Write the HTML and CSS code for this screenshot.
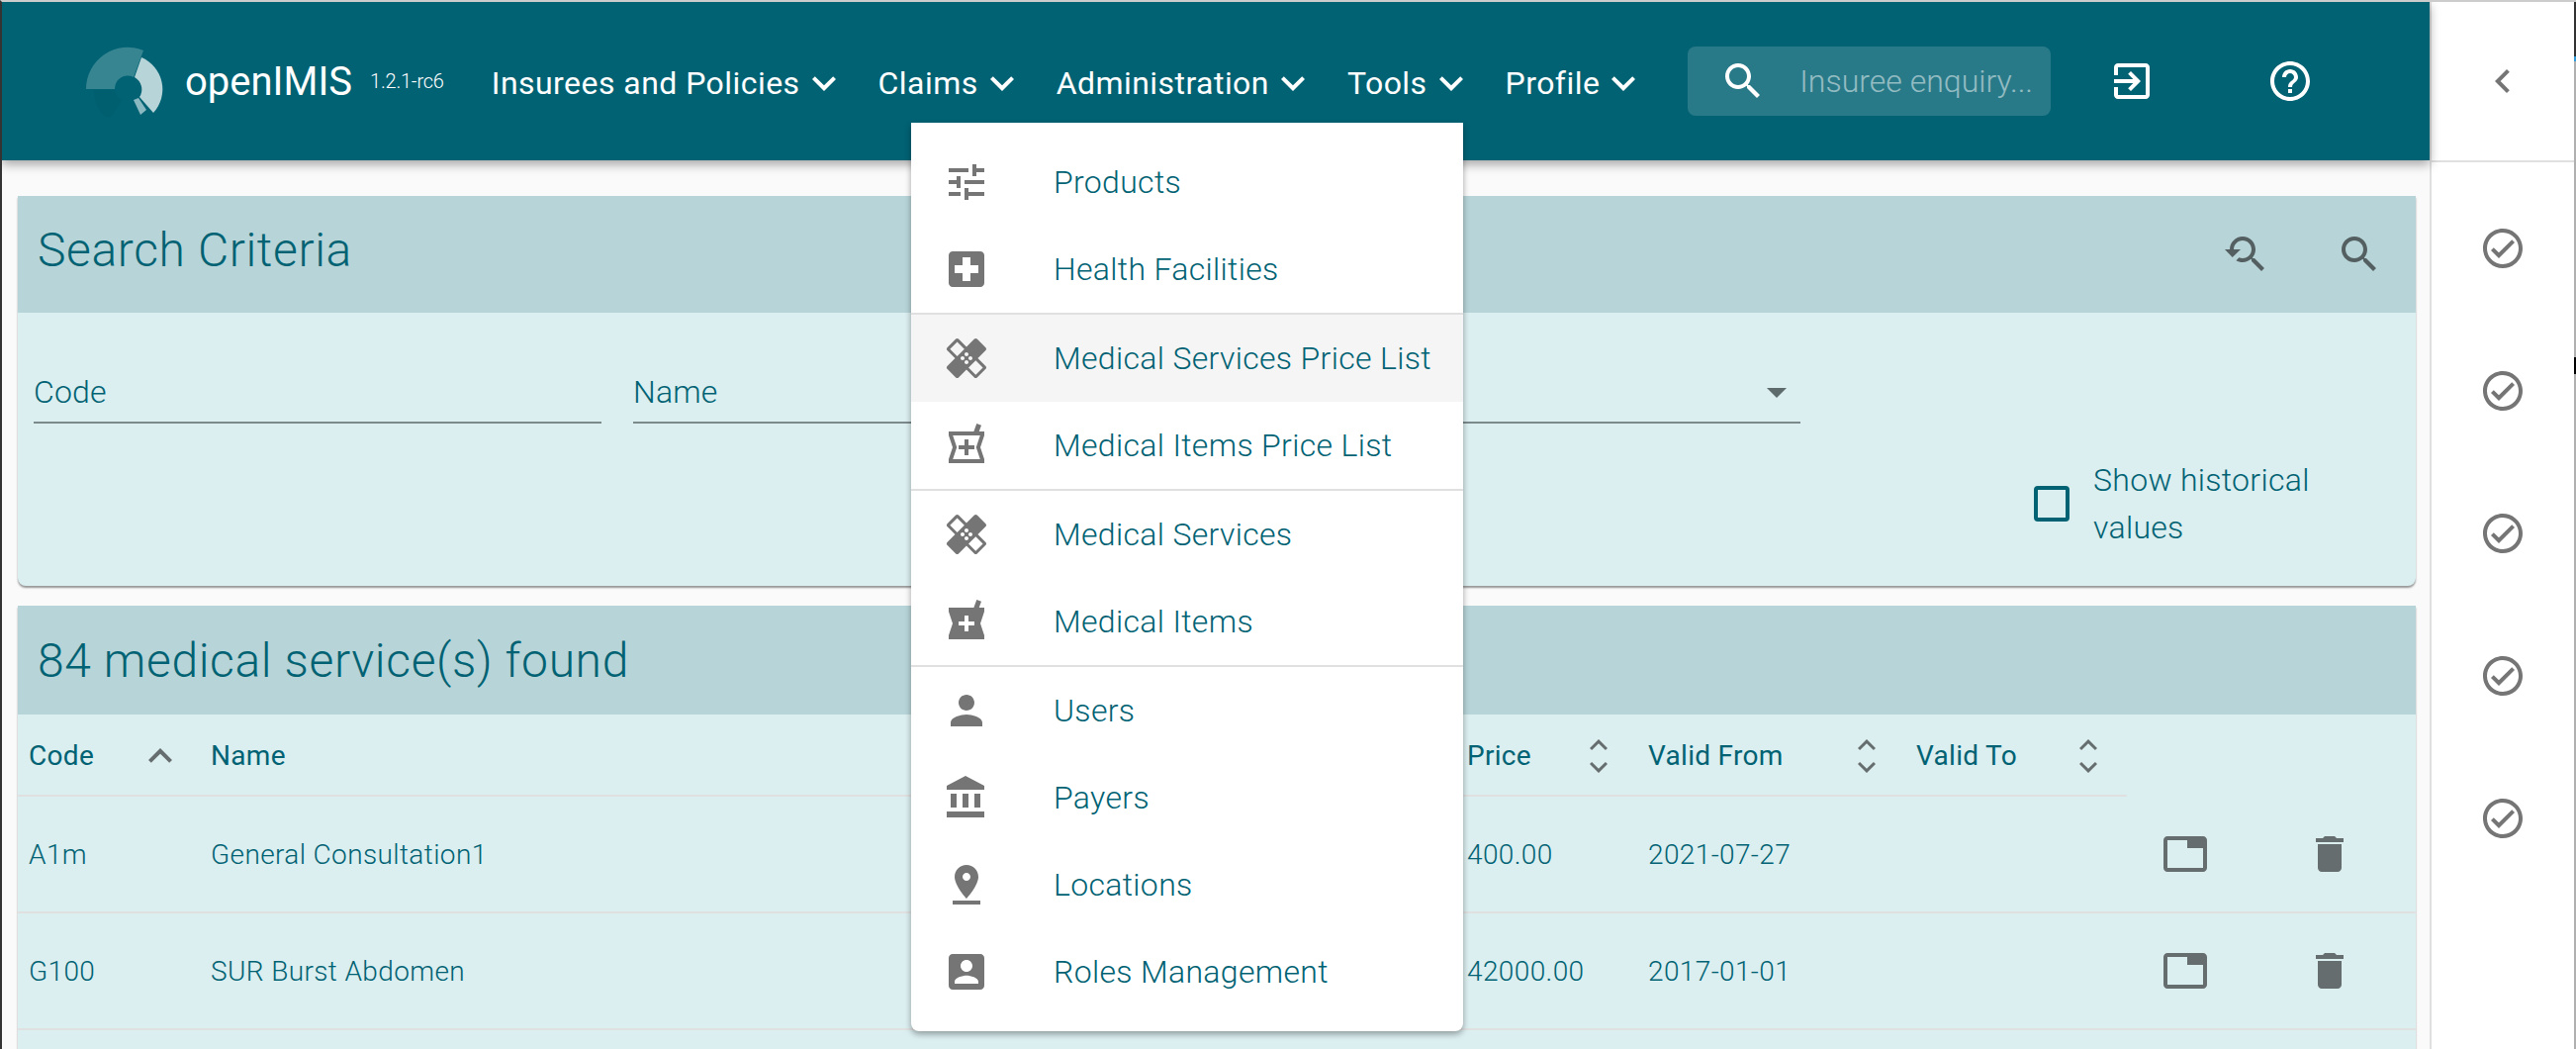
FILE: index.html
```html
<!DOCTYPE html>
<html>
<head>
	<meta charset="utf-8">
	<title>openIMIS</title>
	<link rel="stylesheet" href="styles.css">
</head>
<body>
	<svg class="defs" width="0" height="0">
		<symbol id="i-more" viewBox="0 0 24 24"><path d="M16.59 8.59L12 13.17 7.41 8.59 6 10l6 6 6-6z"/></symbol>
		<symbol id="i-less" viewBox="0 0 24 24"><path d="M12 8l-6 6 1.41 1.41L12 10.83l4.59 4.58L18 14z"/></symbol>
		<symbol id="i-search" viewBox="0 0 24 24"><path d="M15.5 14h-.79l-.28-.27C15.41 12.59 16 11.11 16 9.5 16 5.91 13.09 3 9.5 3S3 5.91 3 9.5 5.91 16 9.5 16c1.61 0 3.09-.59 4.23-1.57l.27.28v.79l5 4.99L20.49 19l-4.99-5zm-6 0C7.01 14 5 11.99 5 9.5S7.01 5 9.5 5 14 7.01 14 9.5 11.99 14 9.5 14z"/></symbol>
		<symbol id="i-healing" viewBox="0 0 24 24"><path d="M17.73 12.02l3.98-3.98c.39-.39.39-1.02 0-1.41l-4.34-4.34c-.39-.39-1.02-.39-1.41 0l-3.98 3.98L8 2.29C7.8 2.1 7.55 2 7.29 2c-.25 0-.51.1-.7.29L2.25 6.63c-.39.39-.39 1.02 0 1.41l3.98 3.98L2.25 16c-.39.39-.39 1.02 0 1.41l4.34 4.34c.39.39 1.02.39 1.41 0l3.98-3.98 3.98 3.98c.2.2.45.29.71.29.26 0 .51-.1.71-.29l4.34-4.34c.39-.39.39-1.02 0-1.41l-3.98-3.98zM12 9c.55 0 1 .45 1 1s-.45 1-1 1-1-.45-1-1 .45-1 1-1zm-4.71 1.96L3.66 7.34l3.63-3.63 3.62 3.62-3.62 3.63zM10 13c-.55 0-1-.45-1-1s.45-1 1-1 1 .45 1 1-.45 1-1 1zm2 2c-.55 0-1-.45-1-1s.45-1 1-1 1 .45 1 1-.45 1-1 1zm2-4c.55 0 1 .45 1 1s-.45 1-1 1-1-.45-1-1 .45-1 1-1zm2.66 9.34l-3.63-3.62 3.63-3.63 3.62 3.62-3.62 3.63z"/></symbol>
		<symbol id="i-check" viewBox="0 0 24 24"><path d="M12 2C6.48 2 2 6.48 2 12s4.48 10 10 10 10-4.48 10-10S17.52 2 12 2zm0 18c-4.41 0-8-3.59-8-8s3.59-8 8-8 8 3.59 8 8-3.59 8-8 8zm4.59-12.42L10 14.17l-2.59-2.58L6 13l4 4 8-8z"/></symbol>
		<symbol id="i-tab" viewBox="0 0 24 24"><path d="M21 3H3c-1.1 0-2 .9-2 2v14c0 1.1.9 2 2 2h18c1.1 0 2-.9 2-2V5c0-1.1-.9-2-2-2zm0 16H3V5h10v4h8v10z"/></symbol>
		<symbol id="i-delete" viewBox="0 0 24 24"><path d="M6 19c0 1.1.9 2 2 2h8c1.1 0 2-.9 2-2V7H6v12zM19 4h-3.5l-1-1h-5l-1 1H5v2h14V4z"/></symbol>
	</svg>

	<div class="page">
		<div class="main">
			<header class="appbar">
				<svg class="logo" viewBox="0 0 90 72">
					<path fill="#005f6f" d="M15 45 L36 45 A13 13 0 0 0 43 55 L30 75 A38 38 0 0 1 15 45Z"/>
					<path fill="#388592" d="M7 44 A42 42 0 0 1 65 5 L55 32 A13 13 0 0 0 36 44Z"/>
					<path fill="#b7d4d8" d="M63 12 A35 35 0 0 1 75 68 L61 52 A14 14 0 0 0 56 32Z"/>
					<path fill="#8bb9c2" d="M55 55 L60 53 L68 65 L62 70Z"/>
				</svg>
				<span class="brand">openIMIS</span>
				<span class="version">1.2.1-rc6</span>
				<nav class="nav">
					<a class="nav-item">Insurees and Policies<svg class="icon"><use href="#i-more"/></svg></a>
					<a class="nav-item">Claims<svg class="icon"><use href="#i-more"/></svg></a>
					<a class="nav-item">Administration<svg class="icon"><use href="#i-more"/></svg></a>
					<a class="nav-item">Tools<svg class="icon"><use href="#i-more"/></svg></a>
					<a class="nav-item">Profile<svg class="icon"><use href="#i-more"/></svg></a>
				</nav>
				<div class="search">
					<svg class="icon"><use href="#i-search"/></svg>
					<span class="search-text">Insuree enquiry...</span>
				</div>
				<svg class="icon exit" viewBox="0 0 24 24"><path d="M10.09 15.59L11.5 17l5-5-5-5-1.41 1.41L12.67 11H3v2h9.67l-2.58 2.59zM19 3H5c-1.11 0-2 .9-2 2v4h2V5h14v14H5v-4H3v4c0 1.1.89 2 2 2h14c1.1 0 2-.9 2-2V5c0-1.1-.9-2-2-2z"/></svg>
				<svg class="icon help" viewBox="0 0 24 24"><path d="M11 18h2v-2h-2v2zm1-16C6.48 2 2 6.48 2 12s4.48 10 10 10 10-4.48 10-10S17.52 2 12 2zm0 18c-4.41 0-8-3.59-8-8s3.59-8 8-8 8 3.59 8 8-3.59 8-8 8zm0-14c-2.21 0-4 1.79-4 4h2c0-1.1.9-2 2-2s2 .9 2 2c0 2-3 1.75-3 5h2c0-2.25 3-2.5 3-5 0-2.21-1.79-4-4-4z"/></svg>
			</header>

			<div class="content">
				<section class="panel criteria">
					<div class="panel-head criteria-head">
						<h2 class="panel-title">Search Criteria</h2>
						<div class="panel-actions">
							<svg class="icon" viewBox="0 0 24 24"><path d="M17.01 14h-.8l-.27-.27c.98-1.14 1.57-2.61 1.57-4.23 0-3.59-2.91-6.5-6.5-6.5s-6.5 3-6.5 6.5H2l3.84 4 4.16-4H6.51C6.51 7 8.53 5 11.01 5s4.5 2.01 4.5 4.5c0 2.48-2.02 4.5-4.5 4.5-.65 0-1.26-.14-1.82-.38L7.71 15.1c.97.57 2.09.9 3.3.9 1.61 0 3.08-.59 4.22-1.57l.27.27v.79l5.01 5L21.99 19l-4.98-5z"/></svg>
							<svg class="icon"><use href="#i-search"/></svg>
						</div>
					</div>
					<div class="criteria-body">
						<div class="field">Code</div>
						<div class="field">Name</div>
						<div class="field field-select"><span class="select-arrow"></span></div>
						<div class="spacer"></div>
						<label class="historical">
							<span class="checkbox"></span>
							<span class="historical-text">Show historical values</span>
						</label>
					</div>
				</section>

				<section class="panel results">
					<div class="panel-head results-head">
						<h2 class="panel-title">84 medical service(s) found</h2>
					</div>
					<table class="grid">
						<colgroup>
							<col class="col-code"><col class="col-name"><col class="col-price"><col class="col-from"><col class="col-to"><col class="col-tab"><col class="col-del">
						</colgroup>
						<thead>
							<tr>
								<th class="head-code"><div class="th-in">Code<svg class="icon"><use href="#i-less"/></svg></div></th>
								<th><div class="th-in">Name</div></th>
								<th><div class="th-in">Price<span class="sort"><svg class="icon"><use href="#i-less"/></svg><svg class="icon"><use href="#i-more"/></svg></span></div></th>
								<th><div class="th-in">Valid From<span class="sort"><svg class="icon"><use href="#i-less"/></svg><svg class="icon"><use href="#i-more"/></svg></span></div></th>
								<th><div class="th-in">Valid To<span class="sort"><svg class="icon"><use href="#i-less"/></svg><svg class="icon"><use href="#i-more"/></svg></span></div></th>
								<th class="th-blank"></th>
								<th class="th-blank"></th>
							</tr>
						</thead>
						<tbody>
							<tr>
								<td>A1m</td>
								<td>General Consultation1</td>
								<td>400.00</td>
								<td>2021-07-27</td>
								<td></td>
								<td class="act"><svg class="icon"><use href="#i-tab"/></svg></td>
								<td class="act"><svg class="icon"><use href="#i-delete"/></svg></td>
							</tr>
							<tr>
								<td>G100</td>
								<td>SUR Burst Abdomen</td>
								<td>42000.00</td>
								<td>2017-01-01</td>
								<td></td>
								<td class="act"><svg class="icon"><use href="#i-tab"/></svg></td>
								<td class="act"><svg class="icon"><use href="#i-delete"/></svg></td>
							</tr>
							<tr>
								<td colspan="7"></td>
							</tr>
						</tbody>
					</table>
				</section>
			</div>
		</div>

		<aside class="drawer">
			<div class="drawer-head">
				<svg class="icon" viewBox="0 0 24 24"><path d="M15.41 7.41L14 6l-6 6 6 6 1.41-1.41L10.83 12z"/></svg>
			</div>
			<div class="drawer-list">
				<svg class="icon"><use href="#i-check"/></svg>
				<svg class="icon"><use href="#i-check"/></svg>
				<svg class="icon"><use href="#i-check"/></svg>
				<svg class="icon"><use href="#i-check"/></svg>
				<svg class="icon"><use href="#i-check"/></svg>
			</div>
		</aside>
		<div class="edge"></div>

		<div class="menu">
			<a class="menu-item">
				<svg class="icon" viewBox="0 0 24 24"><path d="M3 17v2h6v-2H3zM3 5v2h10V5H3zm10 16v-2h8v-2h-8v-2h-2v6h2zM7 9v2H3v2h4v2h2V9H7zm14 4v-2H11v2h10zm-6-4h2V7h4V5h-4V3h-2v6z"/></svg>
				Products
			</a>
			<a class="menu-item">
				<svg class="icon" viewBox="0 0 24 24"><path d="M19 3H5c-1.1 0-1.99.9-1.99 2L3 19c0 1.1.9 2 2 2h14c1.1 0 2-.9 2-2V5c0-1.1-.9-2-2-2zm-1 11h-4v4h-4v-4H6v-4h4V6h4v4h4v4z"/></svg>
				Health Facilities
			</a>
			<div class="menu-divider"></div>
			<a class="menu-item menu-hover">
				<svg class="icon"><use href="#i-healing"/></svg>
				Medical Services Price List
			</a>
			<a class="menu-item">
				<svg class="icon" viewBox="0 0 24 24"><path d="M21 5h-2.64l1.14-3.14L17.15 1l-1.46 4H3v2l2 6-2 6v2h18v-2l-2-6 2-6V5zm-3.9 8.63L18.89 19H5.11l1.79-5.37.21-.63-.21-.63L5.11 7h13.78l-1.79 5.37-.21.63.21.63zM13 9h-2v3H8v2h3v3h2v-3h3v-2h-3z"/></svg>
				Medical Items Price List
			</a>
			<div class="menu-divider"></div>
			<a class="menu-item">
				<svg class="icon"><use href="#i-healing"/></svg>
				Medical Services
			</a>
			<a class="menu-item">
				<svg class="icon" viewBox="0 0 24 24"><path d="M21 5h-2.64l1.14-3.14L17.15 1l-1.46 4H3v2l2 6-2 6v2h18v-2l-2-6 2-6V5zm-5 9h-3v3h-2v-3H8v-2h3V9h2v3h3v2z"/></svg>
				Medical Items
			</a>
			<div class="menu-divider"></div>
			<a class="menu-item">
				<svg class="icon" viewBox="0 0 24 24"><path d="M12 12c2.21 0 4-1.79 4-4s-1.79-4-4-4-4 1.79-4 4 1.79 4 4 4zm0 2c-2.67 0-8 1.34-8 4v2h16v-2c0-2.66-5.33-4-8-4z"/></svg>
				Users
			</a>
			<a class="menu-item">
				<svg class="icon" viewBox="0 0 24 24"><path d="M4 10v7h3v-7H4zm6 0v7h3v-7h-3zM2 22h19v-3H2v3zm14-12v7h3v-7h-3zm-4.5-9L2 6v2h19V6l-9.5-5z"/></svg>
				Payers
			</a>
			<a class="menu-item">
				<svg class="icon" viewBox="0 0 24 24"><path d="M18 8c0-3.31-2.69-6-6-6S6 4.69 6 8c0 4.5 6 11 6 11s6-6.5 6-11zm-8 0c0-1.1.9-2 2-2s2 .9 2 2-.89 2-2 2c-1.1 0-2-.9-2-2zM5 20v2h14v-2H5z"/></svg>
				Locations
			</a>
			<a class="menu-item">
				<svg class="icon" viewBox="0 0 24 24"><path d="M3 5v14c0 1.1.89 2 2 2h14c1.1 0 2-.9 2-2V5c0-1.1-.9-2-2-2H5c-1.11 0-2 .9-2 2zm12 4c0 1.66-1.34 3-3 3s-3-1.34-3-3 1.34-3 3-3 3 1.34 3 3zm-9 8c0-2 4-3.1 6-3.1s6 1.1 6 3.1v1H6v-1z"/></svg>
				Roles Management
			</a>
		</div>
	</div>
</body>
</html>
```

FILE: styles.css
```css
*
{
	box-sizing : border-box;
}
html, body
{
	margin : 0;
	height : 100%;
	overflow : hidden;
}
body
{
	font-family : Roboto, "Liberation Sans", sans-serif;
	font-weight : 300;
	color : #006273;
	background-color : #fafafa;
}
.defs
{
	position : absolute;
}
.icon
{
	display : block;
	flex : none;
	width : 48px;
	height : 48px;
	fill : currentColor;
}
.page
{
	position : relative;
	display : flex;
	height : 1060px;
	border-top : 2px solid #cccccc;
	border-left : 2px solid #333333;
	overflow : hidden;
}
.main
{
	flex : 1;
	min-width : 0;
}
.edge
{
	flex : none;
	width : 2px;
	background : linear-gradient(#333333 0 55px, #2f9bd8 55px 60px, #b0b0b0 60px 359px, #000000 359px 376px, #b0b0b0 376px);
}

/* app bar */
.appbar
{
	position : relative;
	z-index : 1;
	display : flex;
	align-items : center;
	height : 160px;
	padding-left : 78px;
	color : #ffffff;
	background-color : #006273;
	box-shadow : 0 4px 10px rgba(0, 0, 0, 0.35);
}
.logo
{
	flex : none;
	width : 90px;
	height : 72px;
}
.brand
{
	margin-left : 17px;
	font-size : 40px;
	font-weight : 400;
}
.version
{
	margin-left : 18px;
	font-size : 20px;
	letter-spacing : -0.2px;
}
.nav
{
	display : flex;
	margin-left : 48px;
	padding-top : 4px;
	gap : 31px;
	font-size : 32px;
	font-weight : 400;
	letter-spacing : 0.45px;
}
.nav-item
{
	display : flex;
	align-items : center;
	line-height : 52px;
}
.search
{
	display : flex;
	align-items : center;
	width : 367px;
	height : 70px;
	margin-left : 41px;
	padding-left : 32px;
	border-radius : 8px;
	background-color : #297a88;
}
.search-text
{
	margin-left : 33px;
	font-size : 32px;
	color : rgba(255, 255, 255, 0.5);
}
.exit
{
	margin-left : 58px;
}
.help
{
	margin-left : 112px;
}

/* right drawer */
.drawer
{
	flex : none;
	width : 146px;
	border-left : 2px solid #e0e0e0;
	color : #757575;
	background-color : #ffffff;
}
.drawer-head
{
	display : flex;
	justify-content : center;
	align-items : center;
	height : 162px;
	border-bottom : 2px solid #e0e0e0;
}
.drawer-list
{
	display : flex;
	flex-direction : column;
	align-items : center;
	gap : 96px;
	padding-top : 63px;
}

/* panels */
.content
{
	padding : 36px 14px 0 16px;
}
.panel
{
	border-radius : 0 0 8px 8px;
	background-color : #dbeef0;
	box-shadow : 0 2px 2px rgba(0, 0, 0, 0.4);
}
.results
{
	margin-top : 20px;
}
.panel-head
{
	display : flex;
	justify-content : space-between;
	align-items : center;
	padding-left : 20px;
	background-color : #b7d4d8;
}
.criteria-head
{
	height : 118px;
}
.results-head
{
	height : 110px;
}
.panel-title
{
	margin : 0;
	font-size : 48px;
	font-weight : 300;
	letter-spacing : 0.62px;
}
.criteria-head .panel-title
{
	margin-bottom : 10px;
}
.panel-actions
{
	display : flex;
	gap : 68px;
	padding-right : 33px;
	color : #545f61;
}
.criteria-body
{
	display : grid;
	grid-template-columns : repeat(4, 1fr);
	row-gap : 33px;
	padding : 56px 0 35px;
}
.field
{
	height : 56px;
	margin : 0 16px;
	font-size : 32px;
	line-height : 48px;
	letter-spacing : 0.2px;
	border-bottom : 2px solid #7d8a8b;
}
.field-select
{
	position : relative;
}
.select-arrow
{
	position : absolute;
	top : 20px;
	right : 14px;
	border-top : 10px solid #5e6b6c;
	border-left : 10px solid transparent;
	border-right : 10px solid transparent;
}
.spacer
{
	grid-column : 1 / 4;
}
.historical
{
	display : flex;
	align-items : center;
	gap : 24px;
	padding-left : 220px;
	font-size : 32px;
	line-height : 48px;
	letter-spacing : 0.3px;
}
.checkbox
{
	flex : none;
	width : 36px;
	height : 36px;
	border : 4px solid #006273;
	border-radius : 4px;
}
.historical-text
{
	width : 240px;
}

/* results table */
.grid
{
	width : 100%;
	table-layout : fixed;
	border-collapse : separate;
	border-spacing : 0;
}
.col-code { width : 184px; }
.col-name { width : 1270px; }
.col-price { width : 183px; }
.col-from { width : 271px; }
.col-to { width : 224px; }
.col-tab { width : 118px; }
.col-del { width : 174px; }
.grid th
{
	height : 83px;
	padding : 2px 0 0 11px;
	font-size : 28px;
	font-weight : 400;
	letter-spacing : 0.3px;
	text-align : left;
	border-bottom : 2px solid #e0e0e0;
}
.grid th.th-blank
{
	border-bottom : 0;
}
.th-in
{
	display : flex;
	justify-content : space-between;
	align-items : center;
	padding-right : 21px;
}
.head-code .th-in
{
	padding-right : 16px;
}
.th-in > .icon
{
	color : #666d6e;
}
.sort
{
	display : flex;
	flex-direction : column;
	color : #666d6e;
}
.sort .icon
{
	width : 36px;
	height : 36px;
}
.sort .icon + .icon
{
	margin-top : -14px;
}
.grid td
{
	height : 118px;
	padding : 0 0 0 11px;
	font-size : 28px;
	letter-spacing : 0.38px;
	border-bottom : 2px solid #e0e0e0;
}
.grid td.act
{
	padding : 0;
	color : #666d6e;
}
.act .icon
{
	margin : 0 auto;
}

/* administration menu */
.menu
{
	position : absolute;
	z-index : 2;
	top : 122px;
	left : 919px;
	width : 558px;
	padding : 16px 0;
	border-radius : 0 0 8px 8px;
	background-color : #ffffff;
	box-shadow : 0 3px 6px rgba(0, 0, 0, 0.35);
}
.menu-item
{
	display : flex;
	align-items : center;
	height : 88px;
	padding-left : 32px;
	font-size : 32px;
	letter-spacing : 0.32px;
}
.menu-item .icon
{
	margin-right : 64px;
	color : #757575;
}
.menu-hover
{
	background-color : #f5f5f5;
}
.menu-divider
{
	height : 2px;
	background-color : #e0e0e0;
}
```
